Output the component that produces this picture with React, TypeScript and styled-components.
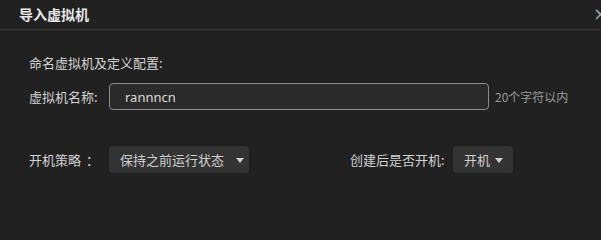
import React from "react";
import styled, { createGlobalStyle } from "styled-components";

const Global = createGlobalStyle`
  html, body { margin: 0; padding: 0; background: #212121; }
  body { font-family: "Microsoft YaHei", "Noto Sans CJK SC", "Noto Sans", sans-serif; }
`;

const Dialog = styled.div`
  width: 601px;
  height: 231px;
  background: #212121;
  overflow: hidden;
  position: relative;
`;

const Header = styled.div`
  height: 30px;
  box-sizing: border-box;
  border-bottom: 1px solid #3c3c3c;
  display: flex;
  align-items: center;
  padding: 0 0 1px 19px;
`;

const Title = styled.div`
  font-size: 14px;
  font-weight: 700;
  color: #e8e8e8;
  line-height: 20px;
`;

const Close = styled.div`
  position: absolute;
  top: 4px;
  left: 593px;
  font-size: 18px;
  line-height: 20px;
  color: #a0a0a0;
  font-family: "DejaVu Sans", sans-serif;
`;

const Body = styled.div`
  padding: 24px 0 0 29px;
  display: flex;
  flex-direction: column;
`;

const SectionTitle = styled.div`
  font-size: 13px;
  color: #d2d2d2;
  line-height: 18px;
  height: 18px;
`;

const Row = styled.div<{ $top: number }>`
  display: flex;
  align-items: center;
  margin-top: ${(p) => p.$top}px;
  height: 27px;
`;

const Label = styled.div<{ $w?: number }>`
  width: ${(p) => p.$w ?? 80}px;
  flex: none;
  font-size: 13px;
  color: #d2d2d2;
  white-space: nowrap;
`;

const WideColon = styled.span`
  margin-left: 5px;
`;

const Input = styled.div`
  width: 380px;
  height: 27px;
  box-sizing: border-box;
  border: 1px solid #8c8c8c;
  border-radius: 4px;
  background: #2a2a2a;
  display: flex;
  align-items: center;
  padding-left: 15px;
  font-family: "Microsoft YaHei", "Noto Sans", "Noto Sans CJK SC", sans-serif;
  font-size: 13px;
  color: #dcdcdc;
`;

const Hint = styled.div`
  margin-left: 6px;
  font-size: 12px;
  color: #9a9a9a;
  white-space: nowrap;
`;

const Select = styled.div<{ $w: number; $pl: number; $gap: number }>`
  width: ${(p) => p.$w}px;
  height: 27px;
  box-sizing: border-box;
  background: #333333;
  border-radius: 4px;
  display: flex;
  align-items: center;
  padding-left: ${(p) => p.$pl}px;
  gap: ${(p) => p.$gap}px;
  font-size: 13px;
  color: #cfcfcf;
  flex: none;
`;

const Caret = styled.span`
  width: 0;
  height: 0;
  border-left: 4px solid transparent;
  border-right: 4px solid transparent;
  border-top: 5px solid #cfcfcf;
  margin-top: 1px;
`;

const Spacer = styled.div<{ $w: number }>`
  width: ${(p) => p.$w}px;
  flex: none;
`;

export default function App() {
  return (
    <>
      <Global />
      <Dialog>
        <Header>
          <Title>导入虚拟机</Title>
        </Header>
        <Close>×</Close>
        <Body>
          <SectionTitle>命名虚拟机及定义配置:</SectionTitle>
          <Row $top={11}>
            <Label>虚拟机名称:</Label>
            <Input>rannncn</Input>
            <Hint>20个字符以内</Hint>
          </Row>
          <Row $top={36}>
            <Label>
              开机策略<WideColon>：</WideColon>
            </Label>
            <Select $w={140} $pl={11} $gap={12}>
              保持之前运行状态
              <Caret />
            </Select>
            <Spacer $w={101} />
            <Label $w={103}>创建后是否开机:</Label>
            <Select $w={60} $pl={11} $gap={5}>
              开机
              <Caret />
            </Select>
          </Row>
        </Body>
      </Dialog>
    </>
  );
}
